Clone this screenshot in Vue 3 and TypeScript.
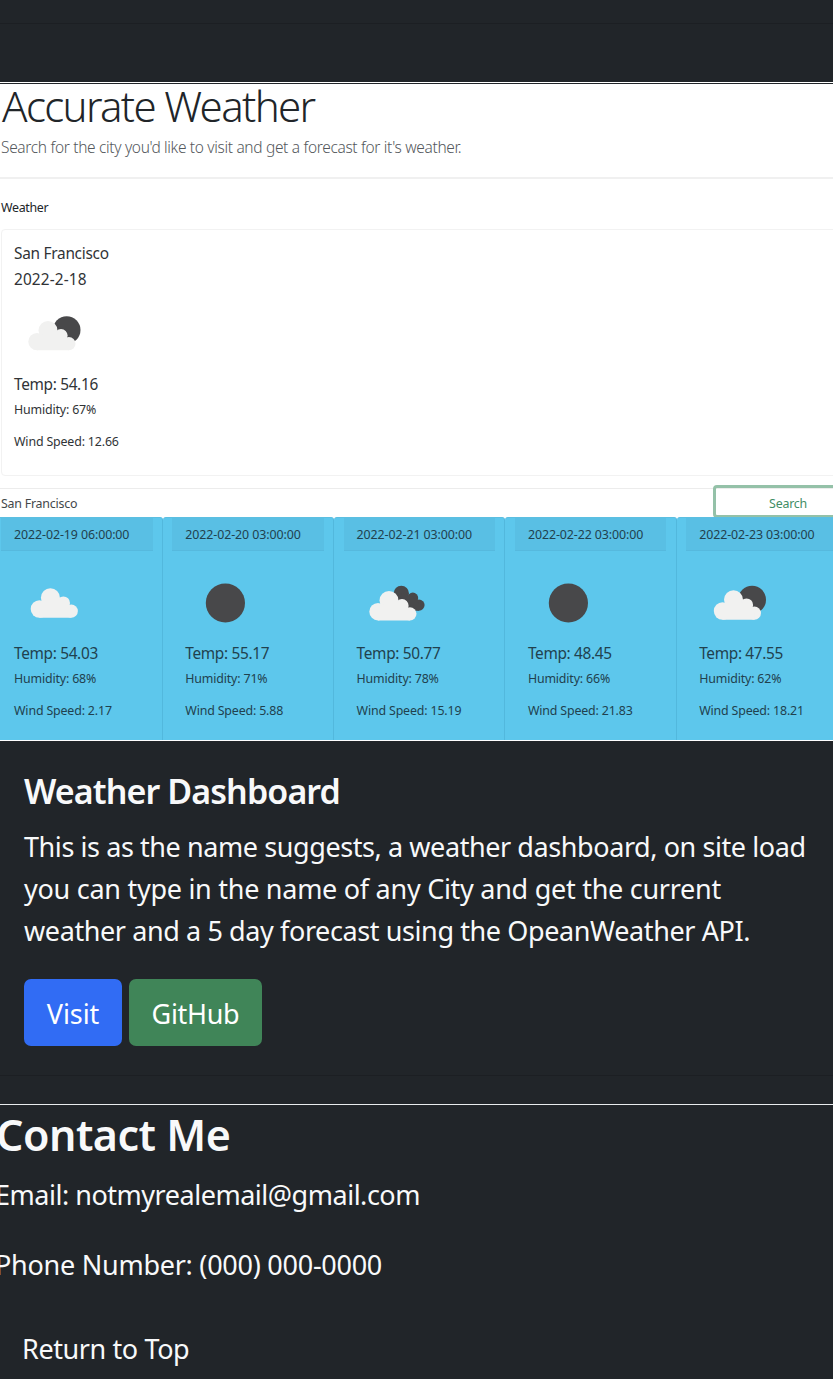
<script setup lang="ts">
type Icon = 'cloud' | 'clear' | 'broken' | 'few'

interface Forecast {
  date: string
  icon: Icon
  temp: string
  humidity: number
  wind: string
}

const forecasts: Forecast[] = [
  { date: '2022-02-19 06:00:00', icon: 'cloud', temp: '54.03', humidity: 68, wind: '2.17' },
  { date: '2022-02-20 03:00:00', icon: 'clear', temp: '55.17', humidity: 71, wind: '5.88' },
  { date: '2022-02-21 03:00:00', icon: 'broken', temp: '50.77', humidity: 78, wind: '15.19' },
  { date: '2022-02-22 03:00:00', icon: 'clear', temp: '48.45', humidity: 66, wind: '21.83' },
  { date: '2022-02-23 03:00:00', icon: 'few', temp: '47.55', humidity: 62, wind: '18.21' },
]
</script>

<template>
  <main class="page">
    <svg class="defs" width="0" height="0" aria-hidden="true">
      <defs>
        <g id="cloud-shape">
          <circle cx="8.7" cy="20.7" r="8.7" />
          <circle cx="19.7" cy="9.5" r="9.5" />
          <circle cx="32.7" cy="14.7" r="6.6" />
          <circle cx="40.6" cy="22.8" r="6.6" />
          <path d="M8.7 29.4V17L20 9L32 14L40.6 22V29.4Z" />
        </g>
      </defs>
    </svg>

    <div class="previous"></div>
    <div class="gap"></div>

    <article class="project">
      <div class="shot">
        <h1 class="title">Accurate Weather</h1>
        <p class="lead">Search for the city you'd like to visit and get a forecast for it's weather.</p>
        <div class="rule"></div>
        <p class="label">Weather</p>
        <section class="current">
          <p class="big city">San Francisco</p>
          <p class="big today">2022-2-18</p>
          <svg class="icon icon-current" viewBox="0 0 90 88">
            <circle class="dark" cx="52.7" cy="48" r="13.8" />
            <use class="light" href="#cloud-shape" x="14.3" y="38.9" />
          </svg>
          <p class="big">Temp: 54.16</p>
          <p class="small">Humidity: 67%</p>
          <p class="small wind">Wind Speed: 12.66</p>
        </section>
        <div class="search">
          <div class="field">San Francisco</div>
          <div class="search-button">Search</div>
        </div>
        <div class="forecast">
          <section v-for="day in forecasts" :key="day.date" class="day">
            <header class="date">{{ day.date }}</header>
            <div class="day-body">
              <svg class="icon" viewBox="0 0 90 88">
                <use v-if="day.icon === 'cloud'" class="light" href="#cloud-shape" x="16.7" y="37.3" />
                <circle v-else-if="day.icon === 'clear'" class="dark" cx="40.4" cy="52" r="19.6" />
                <template v-else-if="day.icon === 'broken'">
                  <g class="dark">
                    <circle cx="44.3" cy="42.5" r="7.7" />
                    <circle cx="55.8" cy="47" r="5.4" />
                    <circle cx="62" cy="54.1" r="5.6" />
                    <path d="M44 42L56 46L62 53V59.7H46Z" />
                  </g>
                  <use class="light" href="#cloud-shape" x="12.3" y="40" />
                </template>
                <template v-else>
                  <circle class="dark" cx="53.1" cy="48.7" r="13.9" />
                  <use class="light" href="#cloud-shape" x="14.8" y="39.3" />
                </template>
              </svg>
              <p class="big">Temp: {{ day.temp }}</p>
              <p class="small">Humidity: {{ day.humidity }}%</p>
              <p class="small wind">Wind Speed: {{ day.wind }}</p>
            </div>
          </section>
        </div>
      </div>

      <div class="details">
        <h2 class="name">Weather Dashboard</h2>
        <p class="text">
          <span class="line l1">This is as the name suggests, a weather dashboard, on site load</span>
          <span class="line l2">you can type in the name of any City and get the current</span>
          <span class="line l3">weather and a 5 day forecast using the OpeanWeather API.</span>
        </p>
        <div class="actions">
          <a class="btn visit">Visit</a>
          <a class="btn github">GitHub</a>
        </div>
      </div>
    </article>

    <footer class="contact">
      <h2 class="contact-title">Contact Me</h2>
      <p class="contact-line email">Email: notmyrealemail@gmail.com</p>
      <p class="contact-line phone">Phone Number: (000) 000-0000</p>
      <a class="top-link">Return to Top</a>
    </footer>
  </main>
</template>

<style>
body {
  background: #212529;
}
</style>

<style scoped>
* {
  box-sizing: border-box;
}
.page {
  height: 1379px;
  overflow: hidden;
  background: #212529;
  color: #f8f9fa;
  font-family: "Noto Sans", "Open Sans", sans-serif;
  white-space: nowrap;
}
h1, h2, p {
  margin: 0;
}
.defs {
  display: block;
}
.previous {
  height: 24px;
  border-bottom: 1px solid #1c1f23;
}
.gap {
  height: 58px;
}
.project {
  height: 994px;
  border-top: 1px solid #fff;
  border-bottom: 1px solid #1c1f23;
}
.shot {
  height: 658px;
  overflow: hidden;
  border-top: 1px solid #212529;
  border-bottom: 1px solid #fff;
  background: #fff;
  color: #212529;
}
.title {
  padding-left: 2px;
  font-size: 42px;
  line-height: 44px;
  font-weight: 300;
  letter-spacing: -1.65px;
}
.lead {
  margin-top: 8px;
  padding-left: 1px;
  font-size: 15.5px;
  line-height: 22px;
  font-weight: 300;
  color: #54585c;
  letter-spacing: -0.33px;
}
.rule {
  height: 2px;
  margin-top: 19px;
  background: #f0f0f0;
}
.label {
  margin-top: 19px;
  padding-left: 1px;
  font-size: 12.4px;
  line-height: 20px;
  letter-spacing: -0.3px;
}
.current {
  height: 247px;
  margin: 11px -10px 0 1px;
  padding: 11px 0 0 12px;
  border: 1px solid #f2f2f2;
  border-radius: 4px;
  color: #303336;
}
.big {
  font-size: 15.4px;
  line-height: 26px;
  letter-spacing: -0.33px;
}
.city {
  letter-spacing: -0.27px;
}
.today {
  letter-spacing: 0.13px;
}
.small {
  font-size: 12.4px;
  line-height: 24px;
  letter-spacing: -0.16px;
}
.wind {
  margin-top: 8px;
}
.icon {
  display: block;
  width: 90px;
  height: 88px;
}
.icon-current {
  margin: -11px 0 2px;
}
.dark {
  fill: #48484a;
}
.light {
  fill: #f1f1f0;
}
.search {
  display: flex;
  height: 29px;
  margin-top: 12px;
  border-top: 1px solid #ececec;
  font-size: 12.4px;
  letter-spacing: -0.22px;
}
.field {
  flex: none;
  width: 713px;
  padding-left: 1px;
  line-height: 29px;
  color: #43474a;
}
.search-button {
  flex: none;
  width: 150px;
  height: 33px;
  margin-top: -4px;
  border: 3px solid #94c1a8;
  border-radius: 4px;
  line-height: 31px;
  text-align: center;
  color: #3f8d65;
}
.forecast {
  position: relative;
  display: grid;
  grid-template-columns: repeat(5, 171.3px);
  height: 223px;
  margin-left: -8.5px;
}
.day {
  border-right: 1px solid #52b8dd;
  border-top: 1px solid #5cbfe1;
  border-radius: 3px 3px 0 0;
  background: #5dc7ec;
  color: #21414e;
}
.date {
  height: 33px;
  margin: 0 9.3px 0 9.5px;
  padding-left: 13px;
  border-bottom: 1px solid #56b9de;
  background: #59bfe4;
  font-size: 12.4px;
  line-height: 33px;
  letter-spacing: -0.09px;
}
.day-body {
  padding-left: 22.5px;
}
.day-body .icon {
  margin-bottom: 2px;
}
.details {
  padding: 29px 24px 0;
}
.name {
  font-size: 34px;
  line-height: 42px;
  font-weight: 600;
  letter-spacing: -0.9px;
}
.text {
  margin-top: 14px;
  font-size: 27px;
  line-height: 42px;
  letter-spacing: -0.4px;
}
.line {
  display: block;
}
.l1 {
  letter-spacing: -0.42px;
}
.l2 {
  letter-spacing: -0.275px;
}
.actions {
  display: flex;
  gap: 7px;
  margin-top: 27px;
}
.btn {
  height: 67px;
  border-radius: 7px;
  font-size: 27px;
  line-height: 69px;
  text-align: center;
  color: #fff;
}
.visit {
  width: 98px;
  background: #316cf4;
  letter-spacing: -0.1px;
}
.github {
  width: 133px;
  background: #408558;
  letter-spacing: -0.3px;
}
.contact {
  margin-top: 28px;
  border-top: 1px solid #e9ebed;
  font-size: 27px;
  line-height: 42px;
  letter-spacing: -0.4px;
}
.contact-title {
  margin-left: -4px;
  padding-top: 4px;
  font-size: 43px;
  line-height: 52px;
  font-weight: 600;
  letter-spacing: -0.5px;
}
.contact-line {
  margin: 13px 0 28px -5px;
  letter-spacing: -0.48px;
}
.phone {
  margin-bottom: 0;
  letter-spacing: -0.26px;
}
.top-link {
  display: block;
  margin: 42px 0 0 22px;
}
</style>
